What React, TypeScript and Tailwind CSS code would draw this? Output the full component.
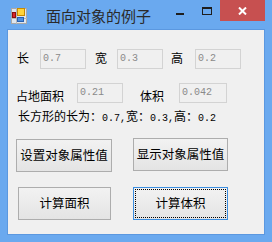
import React from "react";

const cjk = "font-['Noto_Sans_CJK_SC',sans-serif]";
const mono = "font-['Liberation_Mono','DejaVu_Sans_Mono',monospace]";

function Box({ value, w = "w-[46px]", ml }: { value: string; w?: string; ml: string }) {
  return (
    <div
      className={`${w} ${ml} h-[20px] border border-[#d3d3d3] bg-[#f0f0f0] pl-[2px] pt-[3px] text-[10px] leading-[12px] text-[#8a8a8a] ${mono} shrink-0`}
    >
      {value}
    </div>
  );
}

function Btn({ label, cls, focused }: { label: string; cls: string; focused?: boolean }) {
  return (
    <div
      className={`${cls} h-[33px] shrink-0 border ${
        focused ? "border-[#3c8ee0] p-[1px]" : "border-[#adadad]"
      } bg-gradient-to-b from-[#f2f2f2] to-[#e4e4e4] ${cjk} text-[12.5px] text-black flex`}
    >
      <div
        className={`flex-1 flex items-center justify-center ${
          focused ? "border border-dotted border-black" : ""
        }`}
      >
        {label}
      </div>
    </div>
  );
}

function N({ t }: { t: string }) {
  return <span className={`${mono} text-[10px]`}>{t}</span>;
}

export default function App() {
  return (
    <div className="w-[272px] h-[242px] bg-[#6aa9ef] flex flex-col">
      {/* title bar */}
      <div className="h-[29px] flex items-start shrink-0">
        <div className="flex items-center h-[30px] pl-[11px]">
          <svg width="16" height="16" viewBox="0 0 16 16" className="mt-[1px]">
            <rect x="0.5" y="0.5" width="15" height="15" fill="#dfe6ee" stroke="#a8a8a8" />
            <line x1="5.5" y1="0" x2="5.5" y2="16" stroke="#b8b8b8" />
            <line x1="0" y1="10.5" x2="16" y2="10.5" stroke="#b8b8b8" />
            <rect x="6.5" y="0.5" width="7" height="7" fill="#ffd43a" stroke="#c98a00" />
            <rect x="1.5" y="4.5" width="3" height="5" fill="#d8242a" stroke="#8a1010" />
            <rect x="6.5" y="9.5" width="6" height="4" fill="#4d8fe0" stroke="#2860b0" />
          </svg>
          <span className={`ml-[19px] text-[15px] leading-[20px] text-[#2a2a2a] ${cjk} mt-[2px]`}>
            面向对象的例子
          </span>
        </div>
        <div className="ml-auto mr-[7px] flex items-start">
          <div className="w-[27px] h-[21px] relative">
            <div className="absolute left-[10px] top-[13px] w-[8px] h-[2px] bg-[#1e1e1e]" />
          </div>
          <div className="w-[27px] h-[21px] relative">
            <div className="absolute left-[9px] top-[7px] w-[10px] h-[8px] border border-t-2 border-[#1e1e1e]" />
          </div>
          <div className="w-[45px] h-[21px] bg-[#c75050] flex items-center justify-center">
            <svg width="9" height="8" viewBox="0 0 9 8" className="mt-[1px]">
              <path d="M1 0.5 L8 7.5 M8 0.5 L1 7.5" stroke="#ffffff" strokeWidth="2" />
            </svg>
          </div>
        </div>
      </div>

      {/* client */}
      <div className="mx-[7px] mb-[7px] flex-1 border border-[#5b98e0] bg-[#f0f0f0] flex flex-col">
        {/* row 1 */}
        <div className={`mt-[19px] h-[20px] flex items-center ${cjk} text-[12px] text-black`}>
          <span className="ml-[9px] w-[12px] leading-[14px] -mt-[2px]">长</span>
          <Box value="0.7" ml="ml-[11px]" />
          <span className="ml-[9px] w-[12px] leading-[14px] -mt-[2px]">宽</span>
          <Box value="0.3" ml="ml-[10px]" />
          <span className="ml-[8px] w-[12px] leading-[14px] -mt-[2px]">高</span>
          <Box value="0.2" ml="ml-[12px]" />
        </div>
        {/* row 2 */}
        <div className={`mt-[14px] h-[20px] flex items-center ${cjk} text-[12px] text-black`}>
          <span className="ml-[8px] w-[48px] leading-[14px] mt-[5px]">占地面积</span>
          <Box value="0.21" ml="ml-[13px]" />
          <span className="ml-[17px] w-[24px] leading-[14px] mt-[5px]">体积</span>
          <Box value="0.042" ml="ml-[15px]" w="w-[48px]" />
        </div>
        {/* row 3 */}
        <div className={`mt-[6px] h-[14px] ml-[10px] ${cjk} text-[12px] leading-[14px] text-black whitespace-nowrap`}>
          长方形的长为：<N t="0.7," />宽：<N t="0.3," />高：<N t="0.2" />
        </div>
        {/* buttons row 1 */}
        <div className="mt-[15px] flex items-start">
          <div className="mt-[1px] ml-[8px]">
            <Btn label="设置对象属性值" cls="w-[96px]" />
          </div>
          <div className="ml-[21px]">
            <Btn label="显示对象属性值" cls="w-[95px]" />
          </div>
        </div>
        {/* buttons row 2 */}
        <div className="mt-[15px] flex items-start">
          <div className="ml-[10px]">
            <Btn label="计算面积" cls="w-[93px]" />
          </div>
          <div className="ml-[22px]">
            <Btn label="计算体积" cls="w-[95px]" focused />
          </div>
        </div>
      </div>
    </div>
  );
}
